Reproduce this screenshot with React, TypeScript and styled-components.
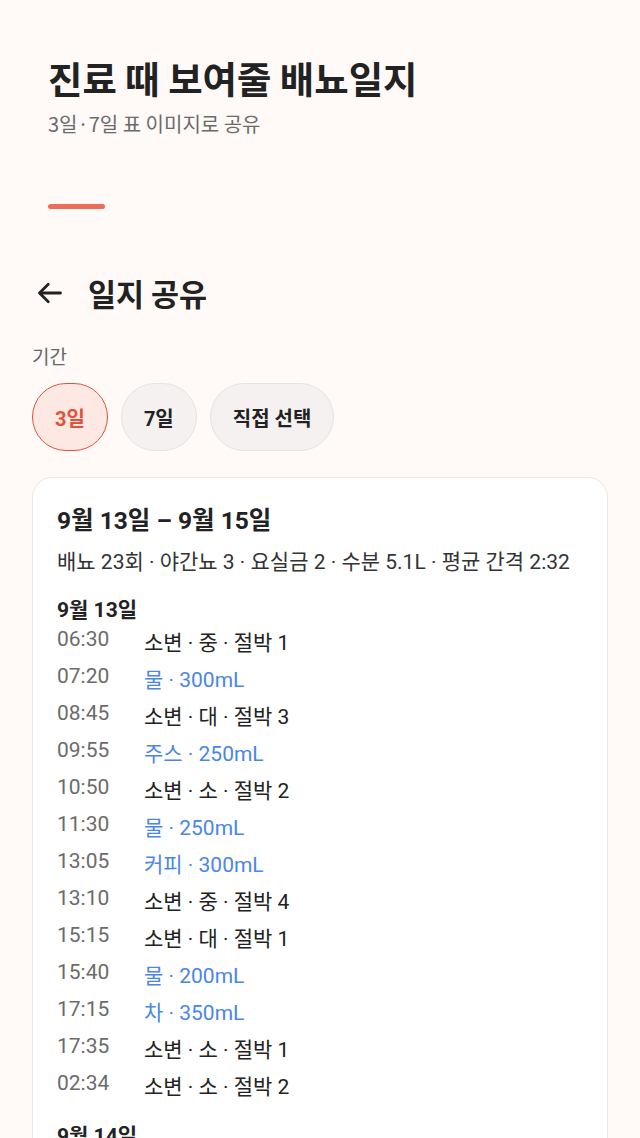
import React from "react";
import styled, { createGlobalStyle } from "styled-components";

const GlobalStyle = createGlobalStyle`
  html, body {
    margin: 0;
    padding: 0;
    background: #FFFAF7;
  }
  body {
    font-family: Roboto, "Noto Sans CJK KR", sans-serif;
    color: #222;
  }
`;

const Page = styled.div`
  width: 640px;
  height: 1138px;
  background: #FFFAF7;
  overflow: hidden;
`;

const Hero = styled.header`
  padding: 52px 48px 0;
  display: flex;
  flex-direction: column;
`;

const HeroTitle = styled.h1`
  margin: 0;
  font-family: "Noto Sans CJK KR", sans-serif;
  font-size: 37.4px;
  line-height: 52px;
  font-weight: 700;
  color: #222;
`;

const HeroSub = styled.div`
  margin-top: 6px;
  font-family: "Noto Sans CJK KR", sans-serif;
  font-size: 20px;
  line-height: 28px;
  color: #6b6b6b;
`;

const AccentBar = styled.div`
  margin-top: 66px;
  width: 57px;
  height: 5px;
  border-radius: 3px;
  background: #EB6E58;
`;

const Body = styled.main`
  padding: 0 32px;
`;

const TopBar = styled.div`
  display: flex;
  align-items: center;
  gap: 24px;
  height: 40px;
  margin-top: 64px;
  padding-left: 4px;
`;

const BackBtn = styled.button`
  border: none;
  background: none;
  padding: 0;
  width: 28px;
  height: 28px;
  display: flex;
  align-items: center;
  justify-content: center;
  color: #222;
`;

const TopTitle = styled.h2`
  margin: 0;
  font-family: "Noto Sans CJK KR", sans-serif;
  font-size: 30.5px;
  line-height: 40px;
  font-weight: 700;
  color: #222;
`;

const Label = styled.div`
  margin-top: 30px;
  font-family: "Noto Sans CJK KR", sans-serif;
  font-size: 19px;
  line-height: 26px;
  color: #666;
`;

const Chips = styled.div`
  display: flex;
  gap: 13px;
  margin-top: 14px;
`;

const Chip = styled.button<{ $active?: boolean }>`
  height: 68px;
  min-width: 75px;
  padding: 0 22px;
  border-radius: 34px;
  border: 1.5px solid ${(p) => (p.$active ? "#E0533B" : "#E7E3E1")};
  background: ${(p) => (p.$active ? "#FDE8E3" : "#F4F1F0")};
  color: ${(p) => (p.$active ? "#E0533B" : "#222")};
  font-family: Roboto, "Noto Sans CJK KR", sans-serif;
  font-size: 20px;
  font-weight: 700;
  display: flex;
  align-items: center;
  justify-content: center;
  box-sizing: border-box;
`;

const Card = styled.section`
  margin-top: 26px;
  background: #fff;
  border: 1.5px solid #ECE7E5;
  border-radius: 20px;
  padding: 26px 24px 20px;
`;

const RangeTitle = styled.div`
  font-size: 24.5px;
  line-height: 34px;
  font-weight: 700;
  color: #222;
`;

const Summary = styled.div`
  margin-top: 9px;
  font-size: 21px;
  line-height: 30px;
  color: #333;
`;

const DayTitle = styled.div<{ $gap?: number }>`
  margin-top: ${(p) => p.$gap ?? 20}px;
  font-size: 21px;
  line-height: 26px;
  font-weight: 700;
  color: #222;
`;

const Row = styled.div`
  display: grid;
  grid-template-columns: 87px 1fr;
  height: 37px;
`;

const Time = styled.div`
  padding-top: 3px;
  font-size: 21px;
  line-height: 26px;
  color: #6b6b6b;
`;

const Entry = styled.div<{ $drink?: boolean }>`
  padding-top: 7px;
  font-size: 21px;
  line-height: 26px;
  color: ${(p) => (p.$drink ? "#4A86E8" : "#222")};
`;

type Log = { t: string; text: string; drink?: boolean };

const day13: Log[] = [
  { t: "06:30", text: "소변 · 중 · 절박 1" },
  { t: "07:20", text: "물 · 300mL", drink: true },
  { t: "08:45", text: "소변 · 대 · 절박 3" },
  { t: "09:55", text: "주스 · 250mL", drink: true },
  { t: "10:50", text: "소변 · 소 · 절박 2" },
  { t: "11:30", text: "물 · 250mL", drink: true },
  { t: "13:05", text: "커피 · 300mL", drink: true },
  { t: "13:10", text: "소변 · 중 · 절박 4" },
  { t: "15:15", text: "소변 · 대 · 절박 1" },
  { t: "15:40", text: "물 · 200mL", drink: true },
  { t: "17:15", text: "차 · 350mL", drink: true },
  { t: "17:35", text: "소변 · 소 · 절박 1" },
  { t: "02:34", text: "소변 · 소 · 절박 2" },
];

const day14: Log[] = [
  { t: "06:10", text: "소변 · 중 · 절박 2" },
  { t: "07:05", text: "물 · 300mL", drink: true },
];

export default function App() {
  return (
    <Page>
      <GlobalStyle />
      <Hero>
        <HeroTitle>진료 때 보여줄 배뇨일지</HeroTitle>
        <HeroSub>3일·7일 표 이미지로 공유</HeroSub>
        <AccentBar />
      </Hero>
      <Body>
        <TopBar>
          <BackBtn aria-label="뒤로">
            <svg width="28" height="28" viewBox="0 0 24 24" fill="none" stroke="currentColor" strokeWidth="2.4" strokeLinecap="round" strokeLinejoin="round">
              <path d="M21 12H3.5" />
              <path d="M10.5 4.5L3 12l7.5 7.5" />
            </svg>
          </BackBtn>
          <TopTitle>일지 공유</TopTitle>
        </TopBar>
        <Label>기간</Label>
        <Chips>
          <Chip $active>3일</Chip>
          <Chip>7일</Chip>
          <Chip>직접 선택</Chip>
        </Chips>
        <Card>
          <RangeTitle>9월 13일 – 9월 15일</RangeTitle>
          <Summary>배뇨 23회 · 야간뇨 3 · 요실금 2 · 수분 5.1L · 평균 간격 2:32</Summary>
          <DayTitle>9월 13일</DayTitle>
          {day13.map((r) => (
            <Row key={r.t}>
              <Time>{r.t}</Time>
              <Entry $drink={r.drink}>{r.text}</Entry>
            </Row>
          ))}
          <DayTitle $gap={19}>9월 14일</DayTitle>
          {day14.map((r) => (
            <Row key={r.t}>
              <Time>{r.t}</Time>
              <Entry $drink={r.drink}>{r.text}</Entry>
            </Row>
          ))}
        </Card>
      </Body>
    </Page>
  );
}
